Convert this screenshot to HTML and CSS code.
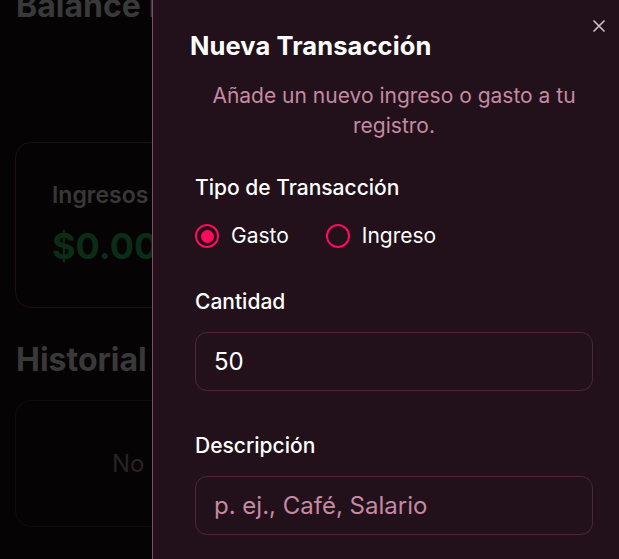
FILE: index.html
```html
<!DOCTYPE html>
<html lang="es">
<head>
<meta charset="utf-8">
<link rel="stylesheet" href="styles.css">
</head>
<body>
<main class="page">
  <h1 class="page-title">Balance Financiero</h1>
  <section class="summary">
    <div class="card">
      <div class="card-label">Ingresos</div>
      <div class="card-value">$0.00</div>
    </div>
  </section>
  <h2 class="section-title">Historial</h2>
  <div class="history">
    <p class="empty">No hay transacciones todavía.</p>
  </div>
</main>

<aside class="sheet">
  <button class="close" aria-label="Cerrar">
    <svg width="14" height="14" viewBox="0 0 14 14"><path d="M2 2L12 12M12 2L2 12" stroke="currentColor" stroke-width="1.7" stroke-linecap="round"/></svg>
  </button>
  <h2 class="sheet-title">Nueva Transacción</h2>
  <p class="sheet-sub">Añade un nuevo ingreso o gasto a tu registro.</p>

  <div class="field field-type">
    <div class="label">Tipo de Transacción</div>
    <div class="radios">
      <label class="radio"><span class="dot checked"></span>Gasto</label>
      <label class="radio"><span class="dot"></span>Ingreso</label>
    </div>
  </div>

  <div class="field field-amount">
    <div class="label">Cantidad</div>
    <div class="input">50</div>
  </div>

  <div class="field field-desc">
    <div class="label">Descripción</div>
    <div class="input placeholder">p. ej., Café, Salario</div>
  </div>
</aside>
</body>
</html>
```
FILE: styles.css
```css
* { box-sizing: border-box; }
html, body { margin: 0; padding: 0; }
body {
  width: 619px;
  height: 559px;
  overflow: hidden;
  background: #060305;
  font-family: Inter, "Noto Sans", sans-serif;
}
.page {
  padding: 0 16px;
  margin-top: -14px;
}
.page-title {
  margin: 0;
  font-size: 32px;
  line-height: 40px;
  font-weight: 700;
  color: #393939;
  white-space: nowrap;
}
.summary {
  margin-top: 116px;
}
.card {
  width: 400px;
  height: 166px;
  margin-left: -1px;
  border: 1px solid #1f0e14;
  border-radius: 16px;
  padding: 37px 36px 0;
}
.card-label {
  font-size: 23px;
  font-weight: 600;
  color: #383838;
  line-height: 30px;
}
.card-value {
  margin-top: 16px;
  font-size: 36px;
  font-weight: 700;
  color: #0a2d16;
  line-height: 40px;
}
.section-title {
  margin: 32px 0 0;
  font-size: 32px;
  font-weight: 700;
  color: #393939;
  line-height: 40px;
}
.history {
  margin-top: 20px;
  margin-left: -1px;
  width: 400px;
  height: 127px;
  border: 1px solid #120a0d;
  border-radius: 16px;
  display: flex;
  align-items: center;
  padding-left: 96px;
}
.empty {
  margin: 0;
  font-size: 24px;
  color: #2a2226;
  white-space: nowrap;
}

.sheet {
  position: fixed;
  top: 0;
  right: 0;
  bottom: 0;
  left: 152px;
  background: #22111a;
  border-left: 1px solid #8a4764;
  padding: 28px 26px 0 42px;
  color: #fff;
}
.close {
  position: absolute;
  top: 19px;
  right: 13px;
  width: 14px;
  height: 14px;
  padding: 0;
  border: 0;
  background: none;
  color: #c9bfc4;
  display: flex;
}
.sheet-title {
  margin: 0 0 0 -5px;
  font-size: 25.5px;
  line-height: 36px;
  font-weight: 700;
  letter-spacing: 0.1px;
  color: #fff;
}
.sheet-sub {
  margin: 17px 0 0;
  text-align: center;
  font-size: 21px;
  line-height: 30px;
  color: #c48aa2;
}
.label {
  font-size: 21px;
  font-weight: 500;
  line-height: 28px;
  color: #fff;
}
.field-type { margin-top: 33px; }
.field-amount { margin-top: 38px; }
.field-desc { margin-top: 41px; }
.radios {
  display: flex;
  gap: 37px;
  margin-top: 20px;
}
.radio {
  display: flex;
  align-items: center;
  gap: 12px;
  font-size: 21px;
  line-height: 28px;
  color: #fff;
}
.dot {
  width: 24px;
  height: 24px;
  border: 2px solid #ff0a5c;
  border-radius: 50%;
  display: flex;
  align-items: center;
  justify-content: center;
}
.dot.checked::after {
  content: "";
  width: 13px;
  height: 13px;
  border-radius: 50%;
  background: #ff0a5c;
}
.input {
  margin-top: 16px;
  height: 59px;
  border: 1px solid #52243a;
  border-radius: 12px;
  display: flex;
  align-items: center;
  padding-left: 18px;
  font-size: 24px;
  color: #fff;
}
.input.placeholder { color: #c48aa2; }
```
